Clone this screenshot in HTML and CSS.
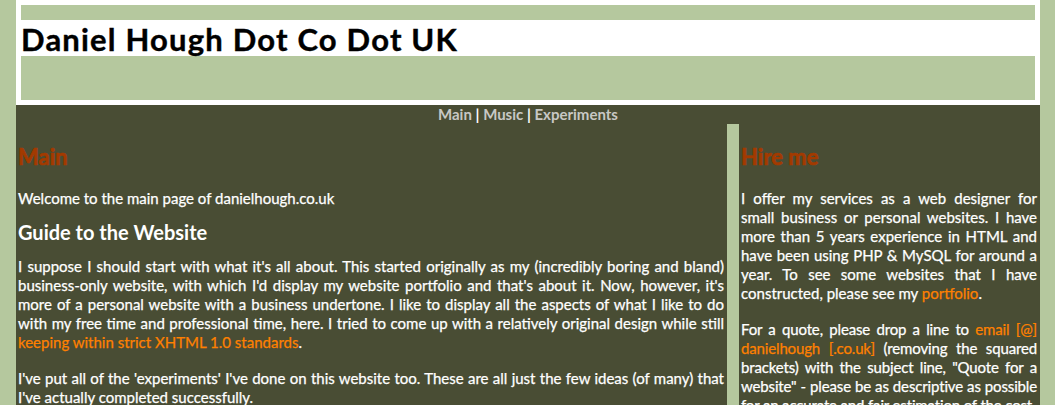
FILE: index.html
```html
<!DOCTYPE html>
<html lang="en">
<head>
<meta charset="utf-8">
<title>Daniel Hough Dot Co Dot UK</title>
<link rel="stylesheet" href="styles.css">
</head>
<body>
<div class="page">
  <header class="header">
    <div class="band-top"></div>
    <h1 class="title">Daniel Hough Dot Co Dot UK</h1>
    <div class="band-bottom"></div>
  </header>
  <nav class="nav">
    <a href="#">Main</a> | <a href="#">Music</a> | <a href="#">Experiments</a>
  </nav>
  <div class="content">
    <main class="main">
      <h2 class="heading">Main</h2>
      <p class="intro">Welcome to the main page of danielhough.co.uk</p>
      <h3 class="subheading">Guide to the Website</h3>
      <p class="para">I suppose I should start with what it's all about. This started originally as my (incredibly boring and bland) business-only website, with which I'd display my website portfolio and that's about it. Now, however, it's more of a personal website with a business undertone. I like to display all the aspects of what I like to do with my free time and professional time, here. I tried to come up with a relatively original design while still <a href="#">keeping within strict XHTML 1.0 standards</a>.</p>
      <p class="para">I've put all of the 'experiments' I've done on this website too. These are all just the few ideas (of many) that I've actually completed successfully.</p>
    </main>
    <aside class="side">
      <h2 class="heading">Hire me</h2>
      <p class="para">I offer my services as a web designer for small business or personal websites. I have more than 5 years experience in HTML and have been using PHP &amp; MySQL for around a year. To see some websites that I have constructed, please see my <a href="#">portfolio</a>.</p>
      <p class="para para-tight">For a quote, please drop a line to <a href="#">email [@] danielhough [.co.uk]</a> (removing the squared brackets) with the subject line, "Quote for a website" - please be as descriptive as possible for an accurate and fair estimation of the cost.</p>
    </aside>
  </div>
</div>
</body>
</html>
```

FILE: styles.css
```css
html, body {
  margin: 0;
  padding: 0;
}
body {
  background: #b5c89e;
  font-family: Lato, "Open Sans", sans-serif;
  color: #ffffff;
}
.page {
  width: 1024px;
  margin-left: 16px;
  background: #494d34;
  min-height: 405px;
}
.header {
  background: #ffffff;
  padding: 5px;
}
.band-top {
  background: #b5c89e;
  height: 15px;
}
.band-bottom {
  background: #b5c89e;
  height: 44px;
}
.title {
  margin: 0;
  height: 36px;
  background: #ffffff;
  color: #000000;
  font-size: 31px;
  line-height: 38px;
  font-weight: 700;
  letter-spacing: 1.2px;
  -webkit-text-stroke: 0.4px #000000;
}
.nav {
  text-align: center;
  font-size: 15px;
  line-height: 19px;
  color: #ffffff;
  font-weight: 700;
}
.nav a {
  color: #c8c8c4;
  text-decoration: none;
}
.content {
  display: flex;
  align-items: flex-start;
}
.main {
  width: 706px;
  padding-left: 2px;
}
.side {
  margin-left: 3px;
  border-left: 12px solid #b5c89e;
  padding: 0 3px 0 2px;
  flex: 1;
  min-height: 281px;
}
.heading {
  margin: 20px 0 19px;
  font-size: 22px;
  line-height: 26px;
  font-weight: 700;
  color: #a33a00;
  -webkit-text-stroke: 0.7px #a33a00;
}
.intro {
  margin: 0 0 12px;
  font-size: 15px;
  line-height: 19px;
  -webkit-text-stroke: 0.25px #ffffff;
}
.subheading {
  margin: 0 0 13px;
  font-size: 20px;
  line-height: 24px;
  font-weight: 700;
}
.para {
  margin: 0 0 17px;
  font-size: 15px;
  line-height: 19px;
  text-align: justify;
  -webkit-text-stroke: 0.25px currentColor;
}
.para-tight {
  letter-spacing: -0.15px;
}
.para a {
  color: #ff8000;
  text-decoration: none;
}
```
